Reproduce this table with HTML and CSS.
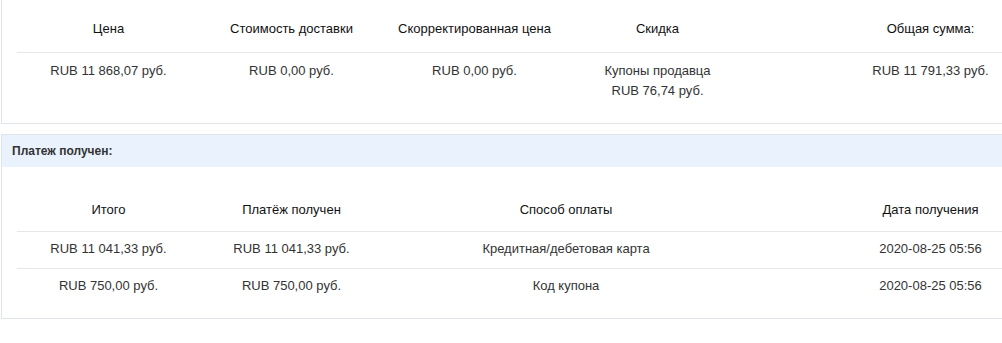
FILE: index.html
```html
<!DOCTYPE html>
<html lang="ru">
<head>
<meta charset="utf-8">
<title>Заказ</title>
<link rel="stylesheet" href="styles.css">
</head>
<body>
<div class="page">
  <section class="panel panel--cut">
    <table class="grid grid--summary">
      <colgroup><col class="c183"><col class="c183"><col class="c183"><col class="c183"><col class="c363"></colgroup>
      <thead>
        <tr><th>Цена</th><th>Стоимость доставки</th><th>Скорректированная цена</th><th>Скидка</th><th>Общая сумма:</th></tr>
      </thead>
      <tbody>
        <tr>
          <td>RUB 11 868,07 руб.</td>
          <td>RUB 0,00 руб.</td>
          <td>RUB 0,00 руб.</td>
          <td>Купоны продавца<br>RUB 76,74 руб.</td>
          <td>RUB 11 791,33 руб.</td>
        </tr>
      </tbody>
    </table>
  </section>

  <section class="panel panel--titled">
    <div class="panel-title">Платеж получен:</div>
    <div class="panel-body">
      <table class="grid">
        <colgroup><col class="c183"><col class="c183"><col class="c366"><col class="c363"></colgroup>
        <thead>
          <tr><th>Итого</th><th>Платёж получен</th><th>Способ оплаты</th><th>Дата получения</th></tr>
        </thead>
        <tbody>
          <tr><td>RUB 11 041,33 руб.</td><td>RUB 11 041,33 руб.</td><td>Кредитная/дебетовая карта</td><td>2020-08-25 05:56</td></tr>
          <tr><td>RUB 750,00 руб.</td><td>RUB 750,00 руб.</td><td>Код купона</td><td>2020-08-25 05:56</td></tr>
        </tbody>
      </table>
    </div>
  </section>
</div>
</body>
</html>
```

FILE: styles.css
```css
html, body {
  margin: 0;
  padding: 0;
  overflow: hidden;
  background: #fff;
}

body {
  font-family: "Liberation Sans", Arial, sans-serif;
  font-size: 13px;
  line-height: 20px;
  color: #333;
}

.page {
  width: 1130px;
  padding-left: 1px;
}

.panel {
  border: 1px solid #e0e5ec;
  background: #fff;
}

.panel--cut {
  border-top: none;
  padding: 0 15px 13px;
}

.panel--titled {
  margin-top: 10px;
}

.panel-title {
  height: 32px;
  line-height: 32px;
  padding-left: 10px;
  background: #eaf2fd;
  font-size: 12px;
  font-weight: bold;
  color: #333;
}

.panel-body {
  padding: 21px 15px 13px;
}

.grid {
  table-layout: fixed;
  border-collapse: collapse;
  width: 1095px;
}

.c183 { width: 183px; }
.c363 { width: 363px; }
.c366 { width: 366px; }

.grid th {
  font-weight: normal;
  color: #111;
  text-align: center;
  padding: 12px 0 11px;
  border-bottom: 1px solid #e4e7eb;
}

.grid--summary th {
  padding-top: 19px;
  padding-bottom: 13px;
}

.grid td {
  text-align: center;
  vertical-align: top;
  padding: 7px 0 9px;
  border-bottom: 1px solid #e4e7eb;
}

.grid tbody tr:last-child td {
  border-bottom: none;
}

.grid--summary td {
  padding-top: 8px;
}
```
